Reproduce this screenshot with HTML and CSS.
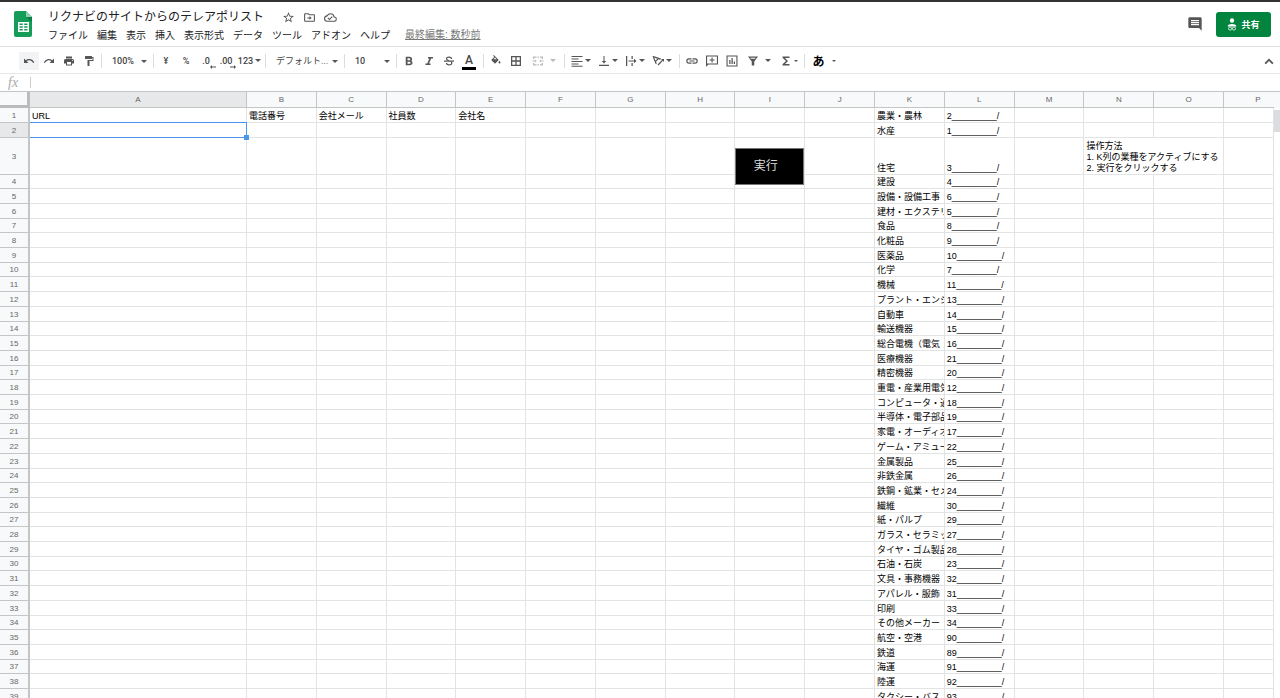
FILE: index.html
```html
<!DOCTYPE html>
<html lang="ja">
<head>
<meta charset="utf-8">
<title>リクナビのサイトからのテレアポリスト</title>
<link rel="stylesheet" href="styles.css">
</head>
<body>
<header class="header">
  <svg class="logo" viewBox="0 0 18 26" aria-hidden="true"><path d="M2 0h10l6 6v18a2 2 0 0 1-2 2H2a2 2 0 0 1-2-2V2a2 2 0 0 1 2-2z" fill="#149c58"/><path d="M12 0l6 6h-6z" fill="#8ed1b1"/><path d="M12 6h6v5z" fill="#0b8043"/><path fill="#fff" fill-rule="evenodd" d="M4 11h11v10H4zM5.500 12.500v1.500h3.300v-1.500zM10.200 12.500v1.500h3.300v-1.500zM5.500 15.200v1.600h3.300v-1.600zM10.200 15.200v1.600h3.300v-1.600zM5.500 18v1.500h3.300V18zM10.200 18v1.500h3.300V18z"/></svg>
  <div class="heading">
    <div class="title-row">
      <input class="title" aria-label="名前を変更" value="リクナビのサイトからのテレアポリスト">
      <button class="title-icon" aria-label="スター"><svg viewBox="0 0 24 24"><path d="M22 9.240l-7.190-.620L12 2 9.190 8.630 2 9.240l5.460 4.730L5.820 21 12 17.270 18.180 21l-1.630-7.030L22 9.240zM12 15.400l-3.760 2.270 1-4.280-3.320-2.880 4.380-.380L12 6.100l1.710 4.040 4.380.380-3.320 2.880 1 4.280L12 15.400z"/></svg></button>
      <button class="title-icon" aria-label="移動"><svg viewBox="0 0 24 24"><path d="M20 6h-8l-2-2H4a2 2 0 0 0-2 2v12a2 2 0 0 0 2 2h16a2 2 0 0 0 2-2V8a2 2 0 0 0-2-2zm0 12H4V6h5.200l2 2H20zM12 16l4-3-4-4v3H8v2h4z"/></svg></button>
      <button class="title-icon" aria-label="保存状態"><svg viewBox="0 0 24 24"><path d="M19.350 10.040A7.490 7.490 0 0 0 12 4C9.110 4 6.600 5.640 5.350 8.040A5.990 5.990 0 0 0 0 14a6 6 0 0 0 6 6h13a5 5 0 0 0 .350-9.960zM19 18H6a4 4 0 0 1-.400-7.970l1.070-.110.500-.950A5.470 5.470 0 0 1 12 6a5.500 5.500 0 0 1 5.390 4.430l.300 1.500 1.530.110A3 3 0 0 1 19 18zM10 14.200L7.900 12.100 6.500 13.500 10 17l6-6-1.400-1.400z"/></svg></button>
    </div>
    <nav class="menu">
      <button>ファイル</button><button>編集</button><button>表示</button><button>挿入</button><button>表示形式</button><button>データ</button><button>ツール</button><button>アドオン</button><button>ヘルプ</button>
      <a class="last-edit" href="#">最終編集: 数秒前</a>
    </nav>
  </div>
  <button class="comments" aria-label="コメント履歴"><svg viewBox="0 0 24 24"><path d="M22 4a2 2 0 0 0-2-2H4a2 2 0 0 0-2 2v12a2 2 0 0 0 2 2h14l4 4zM18 14H6v-2h12zm0-3H6V9h12zm0-3H6V6h12z"/></svg></button>
  <button class="share"><svg viewBox="0 0 16 20" aria-hidden="true"><path d="M8 0a3.500 3.500 0 1 1 0 7 3.500 3.500 0 0 1 0-7zM1 13c0-3 4-4 7-4s7 1 7 4z"/><path fill="none" stroke="#fff" stroke-width="1.500" d="M5 14a2.500 2.500 0 1 0 .1 0M11 14a2.500 2.500 0 1 0 .1 0"/></svg>共有</button>
</header>

<div class="toolbar" role="toolbar" aria-label="ツールバー">
  <button class="tool active" aria-label="元に戻す"><svg viewBox="0 0 24 24"><path d="M12.500 8c-2.650 0-5.050.990-6.900 2.600L2 7v9h9l-3.620-3.620A8 8 0 0 1 20.100 16l2.370-.780A10.500 10.500 0 0 0 12.500 8z"/></svg></button>
  <button class="tool" aria-label="やり直し"><svg viewBox="0 0 24 24"><path d="M18.400 10.600A10.500 10.500 0 0 0 1.540 15.220L3.900 16a8 8 0 0 1 12.720-3.620L13 16h9V7z"/></svg></button>
  <button class="tool" aria-label="印刷"><svg viewBox="0 0 24 24"><path d="M19 8H5a3 3 0 0 0-3 3v6h4v4h12v-4h4v-6a3 3 0 0 0-3-3zm-3 11H8v-5h8zm3-7a1 1 0 1 1 0-2 1 1 0 0 1 0 2zM18 3H6v4h12z"/></svg></button>
  <button class="tool" aria-label="書式のコピー"><svg viewBox="0 0 24 24"><path d="M18 4V3a1 1 0 0 0-1-1H5a1 1 0 0 0-1 1v4a1 1 0 0 0 1 1h12a1 1 0 0 0 1-1V6h1v4H9v11a1 1 0 0 0 1 1h2a1 1 0 0 0 1-1v-9h8V4z"/></svg></button>
  <span class="sep"></span>
  <span class="picker zoom"><select aria-label="ズーム"><option>100%</option></select></span>
  <span class="sep"></span>
  <button class="tool" aria-label="通貨">¥</button>
  <button class="tool" aria-label="パーセント">%</button>
  <button class="tool decimal" aria-label="小数点以下の桁数を減らす">.0<svg viewBox="0 0 6 4"><path d="M0 2l2-2v1.500h4v1H2V4z"/></svg></button>
  <button class="tool decimal" aria-label="小数点以下の桁数を増やす">.00<svg viewBox="0 0 6 4"><path d="M6 2L4 0v1.500H0v1h4V4z"/></svg></button>
  <button class="tool split" aria-label="表示形式の詳細">123<i class="caret"></i></button>
  <span class="sep"></span>
  <span class="picker font"><select aria-label="フォント"><option>デフォルト...</option></select></span>
  <span class="sep"></span>
  <span class="picker size"><select aria-label="フォントサイズ"><option>10</option></select></span>
  <span class="sep"></span>
  <button class="tool" aria-label="太字"><svg viewBox="0 0 24 24"><path d="M16.500 11.800c1.100-.8 1.800-2 1.800-3.200C18.300 5.600 16.100 3.500 13 3.500H5.500v17h8.300c3.100 0 5.200-2.200 5.200-4.800 0-1.800-1-3.200-2.500-3.900zM9 6.500h3.700a1.900 1.900 0 0 1 0 3.800H9zm4.200 11H9v-4h4.200a2 2 0 0 1 0 4z"/></svg></button>
  <button class="tool" aria-label="斜体"><svg viewBox="0 0 24 24"><path d="M10 4v3h2.700l-4.200 10H5v3h10v-3h-2.900l4.200-10H20V4z"/></svg></button>
  <button class="tool" aria-label="取り消し線"><svg viewBox="0 0 24 24"><path d="M2 11h20v2.500H2z"/><path fill="none" stroke="#555" stroke-width="2.500" d="M17 8c0-5-10-5-10-.5 0 2 2 3 5 4M7 16c0 5 10.500 5 10.500.5 0-1.300-.5-2-1-2.800"/></svg></button>
  <button class="tool text-color" aria-label="テキストの色">A</button>
  <span class="sep wide"></span>
  <button class="tool" aria-label="塗りつぶしの色"><svg viewBox="0 0 24 24"><path d="M16.600 9L7.600 0 6.200 1.400l2.400 2.400L3.400 9a1.500 1.500 0 0 0 0 2.100l5.500 5.500a1.500 1.500 0 0 0 2.100 0l5.500-5.500A1.500 1.500 0 0 0 16.600 9zM7 8.500L10 5.200l3.300 3.300zM19 11.500s-2 2.200-2 3.500a2 2 0 0 0 4 0c0-1.300-2-3.500-2-3.500z"/></svg></button>
  <button class="tool" aria-label="枠線"><svg viewBox="0 0 24 24"><path fill-rule="evenodd" d="M2 2h20v20H2zM4.500 4.500v6.200h6.200V4.500zM13.300 4.500v6.200h6.200V4.500zM4.500 13.300v6.200h6.200v-6.200zM13.300 13.300v6.200h6.200v-6.200z"/></svg></button>
  <button class="tool split merge" aria-label="セルを結合"><svg viewBox="0 0 24 24"><path d="M2 3h7v2.500H4.500V8H2zM11 3h3v2.500h-3zM16 3h6v5h-2.500V5.500H16zM2 16h2.500v2.500H9V21H2zM11 18.500h3V21h-3zM19.500 16H22v5h-6v-2.500h3.500zM1 11h5V9l3.500 3L6 15v-2H1zM23 11h-5V9l-3.500 3 3.500 3v-2h5z"/></svg><i class="caret"></i></button>
  <span class="sep"></span>
  <button class="tool split" aria-label="水平方向の配置"><svg viewBox="0 0 24 24"><path d="M1 2h22v2.200H1zM1 7h14v2.200H1zM1 12h22v2.200H1zM1 17h14v2.200H1zM1 21.500h22v2H1z"/></svg><i class="caret"></i></button>
  <button class="tool split" aria-label="垂直方向の配置"><svg viewBox="0 0 24 24"><path d="M16.500 12H13V2h-2v10H7.500l4.500 5zM2 19.500h20V22H2z"/></svg><i class="caret"></i></button>
  <button class="tool split" aria-label="テキストを折り返す"><svg viewBox="0 0 24 24"><path d="M2 2h2.500v20H2zM13 2h2.500v6H13zM13 16h2.500v6H13zM7 11h11V7.500l5 4.500-5 4.500V13H7z"/></svg><i class="caret"></i></button>
  <button class="tool split" aria-label="テキストの回転"><svg viewBox="0 0 24 24"><path fill-rule="evenodd" d="M1 3l2-1 15 5-1 2.500-4-1-5 5 1.500 4-2 1zM4.300 5.200l2.700 6L11 7.500zM11 19l9-9-2-2h6v6l-2.300-2.300L13 21z"/></svg><i class="caret"></i></button>
  <span class="sep wide"></span>
  <button class="tool" aria-label="リンクを挿入"><svg viewBox="0 0 24 24"><path d="M2.900 12A3.100 3.100 0 0 1 6 8.900h5V6.500H6a5.500 5.500 0 0 0 0 11h5v-2.400H6A3.100 3.100 0 0 1 2.900 12zM7 13.200h10v-2.400H7zM18 6.500h-5v2.400h5a3.100 3.100 0 0 1 0 6.200h-5v2.400h5a5.500 5.500 0 0 0 0-11z"/></svg></button>
  <button class="tool" aria-label="コメントを挿入"><svg viewBox="0 0 24 24"><path fill-rule="evenodd" d="M0 1h24v18H5l-5 4.500zM2.200 3.200v14h19.600v-14zM11 5h2.200v4H17v2.200h-3.800v4H11v-4H7V9h4z"/></svg></button>
  <button class="tool" aria-label="グラフを挿入"><svg viewBox="0 0 24 24"><path fill-rule="evenodd" d="M1 1h22v22H1zM3.200 3.200v17.600h17.600V3.200zM6.500 10H9v8H6.500zM11 6h2.500v12H11zM15.500 13H18v5h-2.500z"/></svg></button>
  <button class="tool split filter" aria-label="フィルタ"><svg viewBox="0 0 24 24"><path fill-rule="evenodd" d="M2 3h20l-7.500 10v8h-5v-8zM6.500 5.500L8 7.500h8l1.500-2z"/></svg><i class="caret"></i></button>
  <button class="tool split" aria-label="関数"><svg viewBox="0 0 24 24"><path d="M19 3H5v2.500l7 6.500-7 6.500V21h14v-3.200H10L16 12l-6-5.800h9z"/></svg><i class="caret small"></i></button>
  <span class="sep"></span>
  <button class="tool split ime" aria-label="入力ツール">あ<i class="caret small"></i></button>
  <button class="tool collapse" aria-label="メニューを非表示"><svg viewBox="0 0 24 24"><path d="M12 7l-9 9 2.500 2.500L12 12l6.500 6.500L21 16z"/></svg></button>
</div>

<div class="formula"><label class="fx" for="fx">fx</label><input id="fx"></div>

<main class="sheet">
<table class="grid">
<colgroup><col class="c-num"><col class="c-a"><col span="14"><col class="c-last"></colgroup>
<thead><tr><th class="corner"></th><th class="on">A<th>B<th>C<th>D<th>E<th>F<th>G<th>H<th>I<th>J<th>K<th>L<th>M<th>N<th>O<th class="cut">P</tr></thead>
<tbody>
<tr><th>1<td>URL<td>電話番号<td>会社メール<td>社員数<td>会社名<td><td><td><td><td><td>農業・農林<td>2_________/<td><td><td><td></tr>
<tr><th class="on">2<td class="selected"><td><td><td><td><td><td><td><td><td><td>水産<td>1_________/<td><td><td><td></tr>
<tr class="tall"><th>3<td><td><td><td><td><td><td><td><td class="anchor"><button class="run">実行</button><td><td>住宅<td>3_________/<td><td colspan="2">操作方法<br>1. K列の業種をアクティブにする<br>2. 実行をクリックする<td></tr>
<tr><th>4<td><td><td><td><td><td><td><td><td><td><td>建設<td>4_________/<td><td><td><td></tr>
<tr><th>5<td><td><td><td><td><td><td><td><td><td><td>設備・設備工事<td>6_________/<td><td><td><td></tr>
<tr><th>6<td><td><td><td><td><td><td><td><td><td><td>建材・エクステリア<td>5_________/<td><td><td><td></tr>
<tr><th>7<td><td><td><td><td><td><td><td><td><td><td>食品<td>8_________/<td><td><td><td></tr>
<tr><th>8<td><td><td><td><td><td><td><td><td><td><td>化粧品<td>9_________/<td><td><td><td></tr>
<tr><th>9<td><td><td><td><td><td><td><td><td><td><td>医薬品<td>10_________/<td><td><td><td></tr>
<tr><th>10<td><td><td><td><td><td><td><td><td><td><td>化学<td>7_________/<td><td><td><td></tr>
<tr><th>11<td><td><td><td><td><td><td><td><td><td><td>機械<td>11_________/<td><td><td><td></tr>
<tr><th>12<td><td><td><td><td><td><td><td><td><td><td>プラント・エンジニアリング<td>13_________/<td><td><td><td></tr>
<tr><th>13<td><td><td><td><td><td><td><td><td><td><td>自動車<td>14_________/<td><td><td><td></tr>
<tr><th>14<td><td><td><td><td><td><td><td><td><td><td>輸送機器<td>15_________/<td><td><td><td></tr>
<tr><th>15<td><td><td><td><td><td><td><td><td><td><td>総合電機（電気<td>16_________/<td><td><td><td></tr>
<tr><th>16<td><td><td><td><td><td><td><td><td><td><td>医療機器<td>21_________/<td><td><td><td></tr>
<tr><th>17<td><td><td><td><td><td><td><td><td><td><td>精密機器<td>20_________/<td><td><td><td></tr>
<tr><th>18<td><td><td><td><td><td><td><td><td><td><td>重電・産業用電気機器<td>12_________/<td><td><td><td></tr>
<tr><th>19<td><td><td><td><td><td><td><td><td><td><td>コンピュータ・通信機器<td>18_________/<td><td><td><td></tr>
<tr><th>20<td><td><td><td><td><td><td><td><td><td><td>半導体・電子部品<td>19_________/<td><td><td><td></tr>
<tr><th>21<td><td><td><td><td><td><td><td><td><td><td>家電・オーディオ<td>17_________/<td><td><td><td></tr>
<tr><th>22<td><td><td><td><td><td><td><td><td><td><td>ゲーム・アミューズメント<td>22_________/<td><td><td><td></tr>
<tr><th>23<td><td><td><td><td><td><td><td><td><td><td>金属製品<td>25_________/<td><td><td><td></tr>
<tr><th>24<td><td><td><td><td><td><td><td><td><td><td>非鉄金属<td>26_________/<td><td><td><td></tr>
<tr><th>25<td><td><td><td><td><td><td><td><td><td><td>鉄鋼・鉱業・セメント<td>24_________/<td><td><td><td></tr>
<tr><th>26<td><td><td><td><td><td><td><td><td><td><td>繊維<td>30_________/<td><td><td><td></tr>
<tr><th>27<td><td><td><td><td><td><td><td><td><td><td>紙・パルプ<td>29_________/<td><td><td><td></tr>
<tr><th>28<td><td><td><td><td><td><td><td><td><td><td>ガラス・セラミック<td>27_________/<td><td><td><td></tr>
<tr><th>29<td><td><td><td><td><td><td><td><td><td><td>タイヤ・ゴム製品<td>28_________/<td><td><td><td></tr>
<tr><th>30<td><td><td><td><td><td><td><td><td><td><td>石油・石炭<td>23_________/<td><td><td><td></tr>
<tr><th>31<td><td><td><td><td><td><td><td><td><td><td>文具・事務機器<td>32_________/<td><td><td><td></tr>
<tr><th>32<td><td><td><td><td><td><td><td><td><td><td>アパレル・服飾<td>31_________/<td><td><td><td></tr>
<tr><th>33<td><td><td><td><td><td><td><td><td><td><td>印刷<td>33_________/<td><td><td><td></tr>
<tr><th>34<td><td><td><td><td><td><td><td><td><td><td>その他メーカー<td>34_________/<td><td><td><td></tr>
<tr><th>35<td><td><td><td><td><td><td><td><td><td><td>航空・空港<td>90_________/<td><td><td><td></tr>
<tr><th>36<td><td><td><td><td><td><td><td><td><td><td>鉄道<td>89_________/<td><td><td><td></tr>
<tr><th>37<td><td><td><td><td><td><td><td><td><td><td>海運<td>91_________/<td><td><td><td></tr>
<tr><th>38<td><td><td><td><td><td><td><td><td><td><td>陸運<td>92_________/<td><td><td><td></tr>
<tr><th>39<td><td><td><td><td><td><td><td><td><td><td>タクシー・バス<td>93_________/<td><td><td><td></tr>
</tbody>
</table>
<div class="scroll"><div class="thumb"></div></div>
</main>
</body>
</html>
```
FILE: styles.css
```css
* { box-sizing: border-box; }

body {
  margin: 0;
  height: 100vh;
  overflow: hidden;
  display: flex;
  flex-direction: column;
  border-top: 2px solid #333;
  background: #fff;
  color: #000;
  font-family: "Liberation Sans", "Noto Sans CJK JP", sans-serif;
  font-size: 9px;
}

button, input, select {
  margin: 0;
  padding: 0;
  border: 0;
  background: none;
  font: inherit;
  color: inherit;
  outline: none;
}

svg { display: block; fill: #555; }

/* Header */
.header {
  display: flex;
  flex: none;
  align-items: center;
  height: 45px;
  padding: 0 9px 0 14px;
  border-bottom: 1px solid #e0e2e4;
}
.logo { width: 18px; height: 26px; }
.heading { flex: 1; margin-left: 16px; padding-top: 2px; }
.title-row { display: flex; align-items: center; height: 22px; gap: 8px; }
.title {
  width: 226px;
  height: 20px;
  padding-bottom: 3px;
  font-size: 12px;
  color: #202124;
}
.title-icon svg { width: 13px; height: 13px; }
.menu {
  display: flex;
  align-items: center;
  gap: 9px;
  height: 16px;
  font-size: 10px;
  line-height: 16px;
  color: #202124;
}
.last-edit { align-self: flex-start; margin-left: 6px; color: #777; line-height: 14px; }
.comments { margin-right: 13px; }
.comments svg { width: 16px; height: 16px; }
.share {
  display: flex;
  align-items: center;
  justify-content: center;
  gap: 4px;
  width: 55px;
  height: 25px;
  border-radius: 3px;
  background: #00843e;
  color: #fff;
  font-size: 9px;
  font-weight: bold;
}
.share svg { width: 10px; height: 13px; fill: #fff; }

/* Toolbar */
.toolbar {
  display: flex;
  flex: none;
  align-items: center;
  height: 27px;
  padding: 1px 1px 0 19px;
  border-bottom: 1px solid #e4e6e8;
  color: #444;
  font-family: Roboto, "Noto Sans CJK JP", sans-serif;
  font-weight: 500;
}
.tool {
  display: flex;
  align-items: center;
  justify-content: center;
  width: 20px;
  height: 18px;
}
.tool svg { flex: none; width: 12px; height: 12px; }
.active { background: #f1f3f4; }
.decimal { position: relative; }
.decimal svg { position: absolute; right: 0; bottom: 1px; width: 6px; height: 4px; }
.split { width: 27px; gap: 2px; }
.merge { width: 36px; gap: 6px; opacity: 0.4; }
.filter { width: 33px; gap: 6px; }
.ime { width: 34px; gap: 7px; font-size: 12px; font-weight: bold; color: #000; }
.text-color { position: relative; font-size: 12px; line-height: 14px; padding-bottom: 2px; }
.text-color::after {
  content: "";
  position: absolute;
  left: 3px;
  right: 3px;
  bottom: 0;
  height: 3px;
  background: #000;
}
.caret, .picker::after {
  border: 3px solid transparent;
  border-top-color: #555;
  border-bottom: 0;
}
.small { border-width: 2px 2px 0; }
.sep { width: 1px; height: 14px; margin: 0 2px; background: #dadce0; }
.wide { margin: 0 2px 0 4px; }
.picker { position: relative; height: 18px; }
.picker::after {
  content: "";
  position: absolute;
  right: 4px;
  top: 8px;
  pointer-events: none;
}
.picker select { appearance: none; width: 100%; height: 18px; padding-left: 8px; }
.zoom, .size { width: 47px; }
.font { width: 74px; font-weight: 400; }
.collapse { margin-left: auto; }

/* Formula bar */
.formula { display: flex; flex: none; align-items: center; height: 17px; }
.fx {
  width: 30px;
  padding-left: 8px;
  font: italic 14px/16px "Liberation Serif", serif;
  color: #aaa;
}
.formula input { flex: 1; height: 11px; border-left: 1px solid #ccc; }

/* Spreadsheet */
.sheet { display: flex; flex: 1; min-height: 0; border-top: 1px solid #c4c6c6; }
.grid {
  flex: 1;
  align-self: flex-start;
  width: 0;
  table-layout: fixed;
  border-spacing: 0;
  line-height: 11px;
}
.c-num { width: 30px; }
.c-a { width: 217px; }
.c-last { width: 50px; }
.grid tr { height: 15px; }
.grid tr:nth-child(10n+4), .grid tr:nth-child(10n+7), .grid tr:nth-child(10n) { height: 14px; }
.grid thead tr { height: 16px; }
.grid tr.tall { height: 37px; }
.grid th {
  padding: 0;
  border: solid #c4c6c6;
  border-width: 0 1px 1px 0;
  background: #f8f9fa;
  color: #666;
  font-size: 8px;
  font-weight: normal;
}
.grid tbody th { border-right-width: 2px; }
.grid th.corner { border: solid #bbb; border-width: 0 3px 3px 0; }
.grid th.cut { padding-left: 18px; border-right: 0; }
.grid th.on { background: #e6e8ea; }
.grid td {
  padding: 0 0 0 2px;
  border: solid #e2e3e3;
  border-width: 0 1px 1px 0;
  vertical-align: bottom;
  overflow: hidden;
  white-space: nowrap;
}
.grid .selected { position: relative; overflow: visible; }
.selected::before {
  content: "";
  position: absolute;
  inset: -1px -1px -1px 0;
  border: 1px solid #4a96ec;
  border-left: 0;
}
.selected::after {
  content: "";
  position: absolute;
  right: -3px;
  bottom: -3px;
  width: 5px;
  height: 5px;
  background: #4a96ec;
}
.grid .anchor { position: relative; overflow: visible; }
.run {
  position: absolute;
  top: 10px;
  left: 0;
  width: 100%;
  height: 37px;
  padding-right: 8px;
  border: 1px solid #777;
  background: #000;
  color: #ddd;
  font-size: 12px;
}
.scroll { width: 6px; border-top: 16px solid #f8f9fa; }
.thumb { height: 22px; margin-top: 2px; background: #dadce0; }
```
